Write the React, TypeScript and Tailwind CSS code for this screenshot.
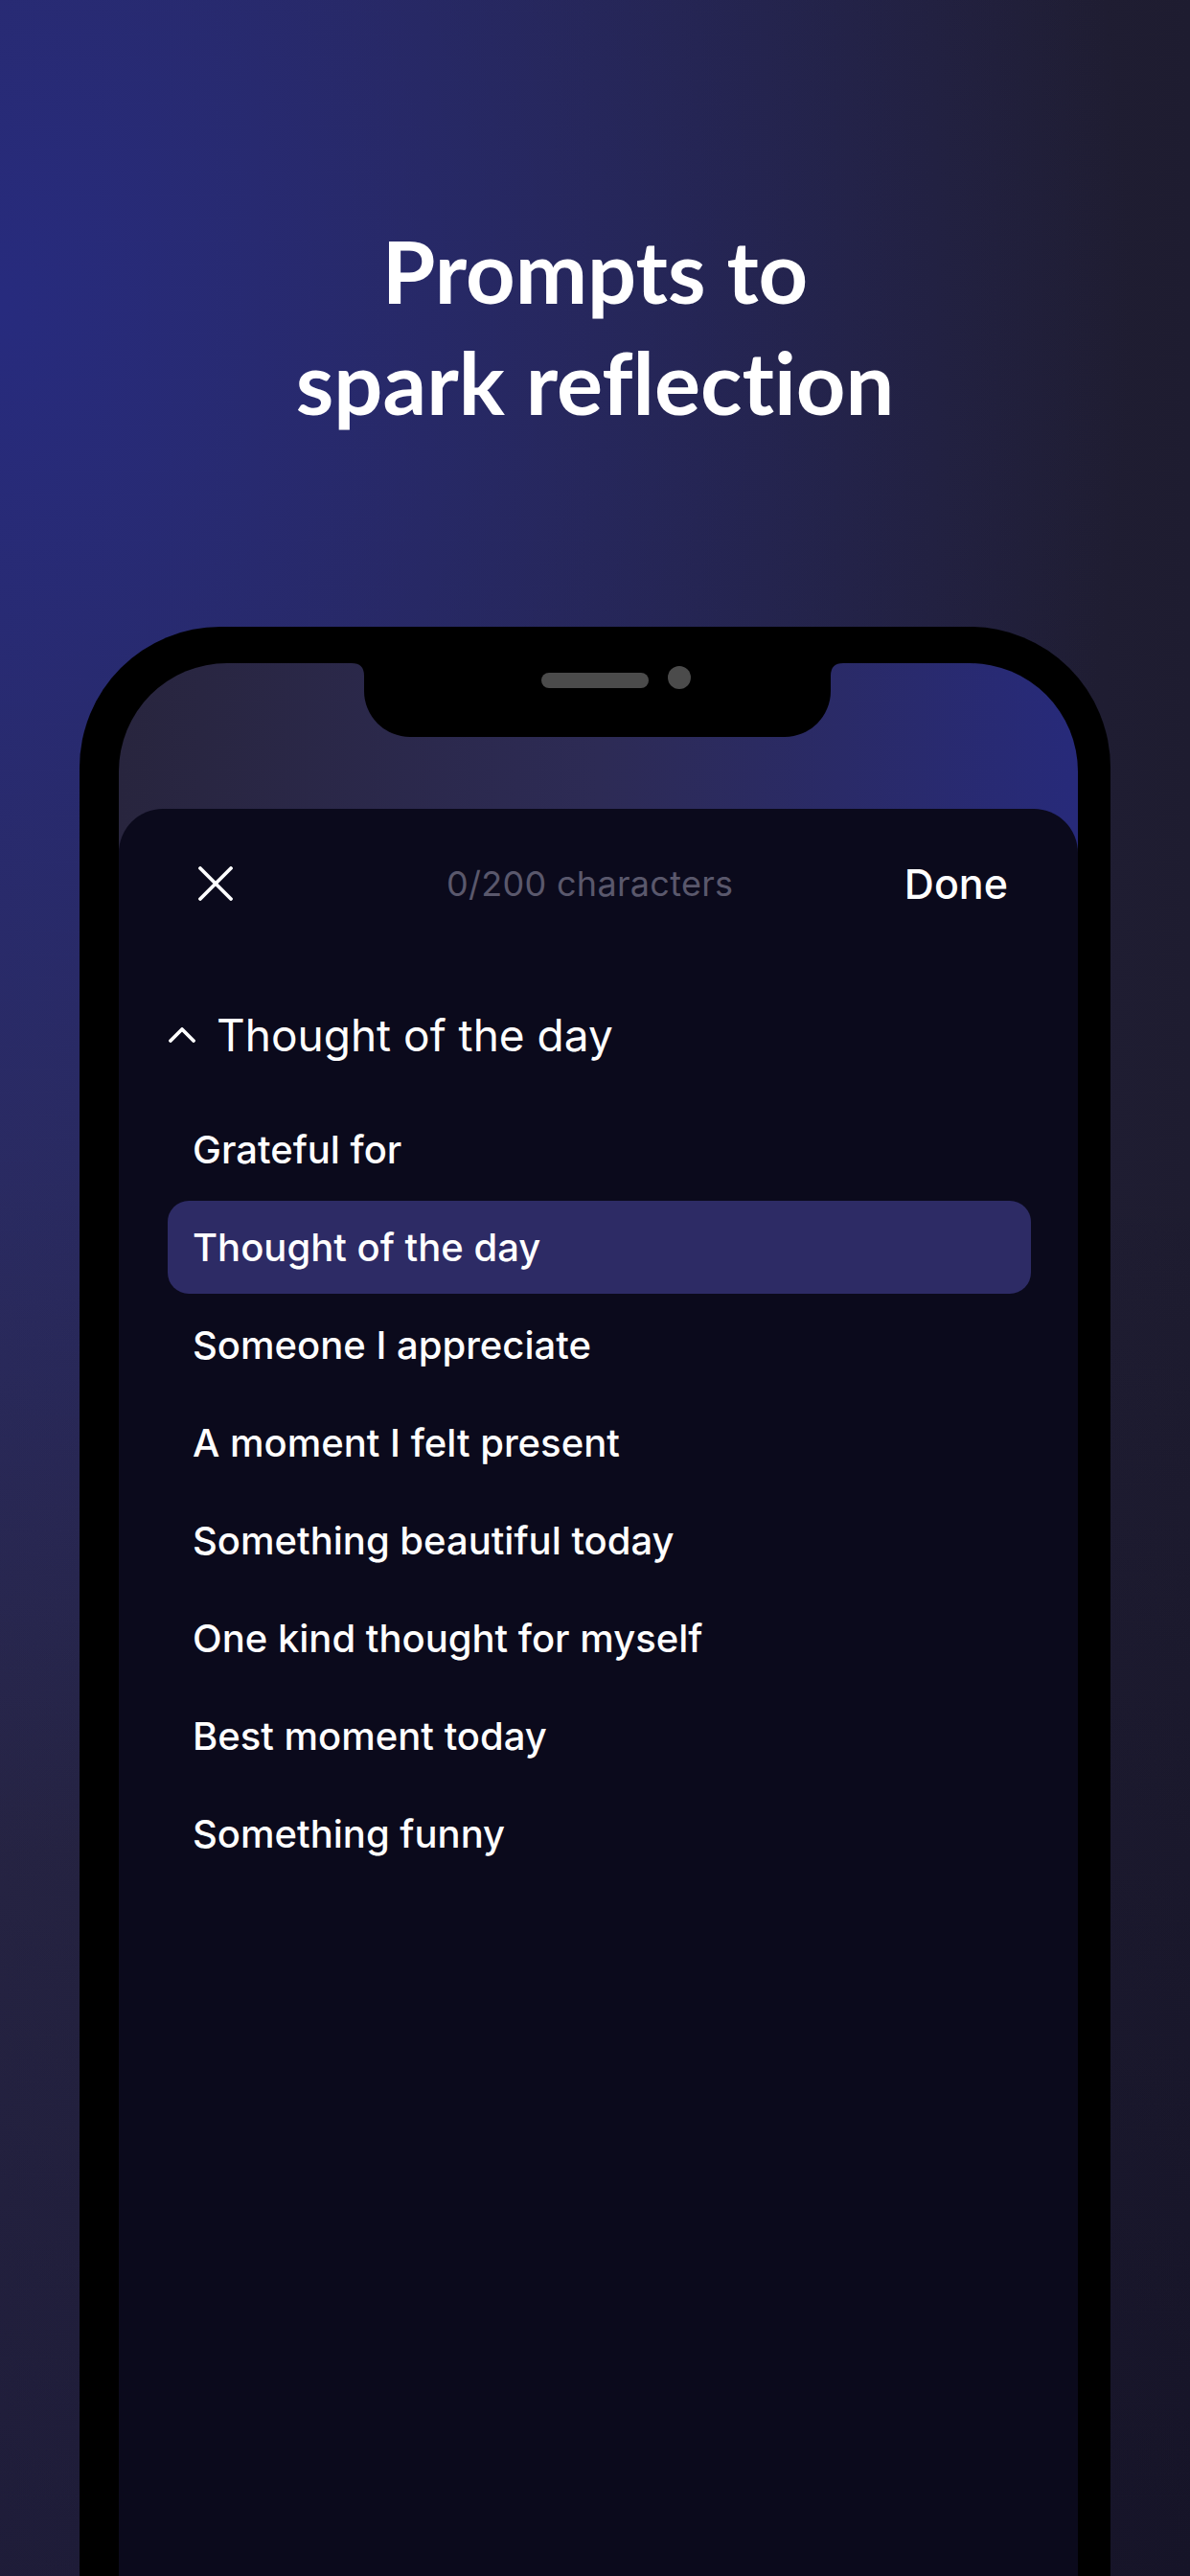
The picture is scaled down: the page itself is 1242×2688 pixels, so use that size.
import React from "react";

const prompts = [
  "Grateful for",
  "Thought of the day",
  "Someone I appreciate",
  "A moment I felt present",
  "Something beautiful today",
  "One kind thought for myself",
  "Best moment today",
  "Something funny",
];

const selected = "Thought of the day";

const CloseIcon = () => (
  <svg width="36" height="36" viewBox="0 0 36 36" fill="none">
    <path d="M2 2L34 34M34 2L2 34" stroke="white" strokeWidth="3.8" strokeLinecap="round" />
  </svg>
);

const ChevronUp = () => (
  <svg width="28" height="16" viewBox="0 0 28 16" fill="none">
    <path d="M2 14L14 2L26 14" stroke="white" strokeWidth="3.8" strokeLinecap="round" strokeLinejoin="round" />
  </svg>
);

// notch cut-out with the small flares where it meets the top of the screen
const Notch = () => (
  <svg width="513" height="77" viewBox="0 0 513 77" className="block">
    <path
      d="M0 0 Q13 0 13 13 V29 A48 48 0 0 0 61 77 H452 A48 48 0 0 0 500 29 V13 Q500 0 513 0 Z"
      fill="black"
    />
  </svg>
);

const PromptRow = ({ label, active }: { label: string; active: boolean }) => (
  <div
    className={`flex h-[97px] items-center rounded-[22px] pl-[26px] text-[40px] font-medium text-white ${
      active ? "bg-[#2d2b65]" : ""
    }`}
  >
    {label}
  </div>
);

export default function App() {
  return (
    <div className="relative flex h-[2688px] w-[1242px] flex-col items-center overflow-hidden bg-[radial-gradient(ellipse_95%_60%_at_0%_12%,rgba(39,43,126,1)_0%,rgba(39,43,126,0.55)_45%,rgba(39,43,126,0)_100%),linear-gradient(to_bottom,rgba(10,8,28,0)_45%,rgba(10,8,28,0.4)_100%),linear-gradient(to_right,#2c2a4c_0%,#1e1c30_100%)]">
      <h1 className="pt-[224px] text-center font-['Lato',sans-serif] text-[90px] font-bold leading-[116px] text-white [font-variant-ligatures:none]">
        Prompts to
        <br />
        spark reflection
      </h1>

      {/* phone body */}
      <div className="mt-[198px] flex h-[2100px] w-[1076px] shrink-0 flex-col rounded-t-[147px] bg-black pl-[41px] pr-[34px] pt-[38px]">
        <div className="relative flex flex-1 flex-col rounded-t-[113px] bg-[linear-gradient(to_right,#28253e_0%,#2d2b55_50%,#272a7a_100%)]">
          <div className="absolute left-[243px] top-0">
            <Notch />
            <div className="absolute left-[198px] top-[10px] h-[16px] w-[112px] rounded-full bg-[#4b4b4b]" />
            <div className="absolute left-[330px] top-[3px] h-[24px] w-[24px] rounded-full bg-[#4b4b4b]" />
          </div>

          {/* sheet */}
          <div className="mt-[152px] flex flex-1 flex-col rounded-t-[46px] bg-[#0b0a1c] pt-[48px] font-['Inter',sans-serif]">
            <div className="flex h-[60px] items-center pl-[83px] pr-[73px]">
              <CloseIcon />
              <span className="ml-[223px] text-[36px] tracking-[0.3px] text-[#5a586c]">0/200 characters</span>
              <span className="ml-auto text-[43px] font-medium text-white">Done</span>
            </div>

            <div className="mt-[98px] flex h-[60px] items-center gap-[22px] pl-[52px]">
              <ChevronUp />
              <span className="text-[46px] text-white">{selected}</span>
            </div>

            <div className="mt-[41px] flex flex-col gap-[5px] pl-[51px] pr-[49px]">
              {prompts.map((p) => (
                <PromptRow key={p} label={p} active={p === selected} />
              ))}
            </div>
          </div>
        </div>
      </div>
    </div>
  );
}
